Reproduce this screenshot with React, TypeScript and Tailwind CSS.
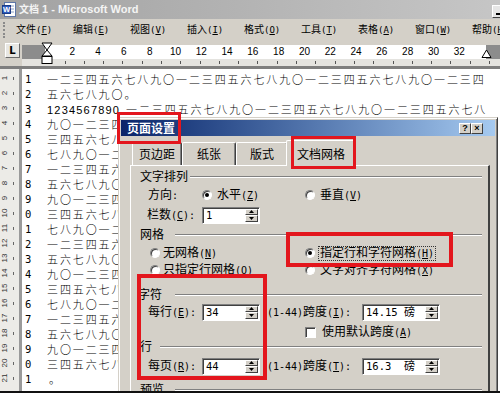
import React from "react";

const SEQ = "一二三四五六七八九〇";
const seq = (start: number, n: number) =>
  Array.from({ length: n }, (_, i) => SEQ[(start + i) % 10]).join("");

function Acc({ k, colon, small }: { k: string; colon?: boolean; small?: boolean }) {
  return (
    <span
      className={
        small
          ? "font-['DejaVu_Sans_Mono',monospace] text-[9px]"
          : "font-['DejaVu_Sans_Mono',monospace] text-[10px]"
      }
    >
      (<span className="underline underline-offset-1">{k}</span>){colon ? ":" : ""}
    </span>
  );
}

function Radio({ checked }: { checked?: boolean }) {
  return (
    <span className="inline-flex shrink-0 w-[10px] h-[10px] rounded-full bg-white items-center justify-center border border-t-[#808080] border-l-[#808080] border-r-white border-b-white shadow-[inset_1px_1px_0_#404040]">
      {checked ? <span className="block w-[4px] h-[4px] rounded-full bg-black" /> : null}
    </span>
  );
}

function SpinBtn({ up }: { up?: boolean }) {
  return (
    <div className="flex-1 bg-[#d4d0c8] border border-t-white border-l-white border-r-[#404040] border-b-[#404040] flex items-center justify-center">
      <svg width="5" height="3" viewBox="0 0 5 3">
        <polygon points={up ? "2.5,0 5,3 0,3" : "0,0 5,0 2.5,3"} fill="#000" />
      </svg>
    </div>
  );
}

function SpinBox({ children, wide }: { children: React.ReactNode; wide?: boolean }) {
  return (
    <div
      className={
        (wide ? "w-[78px]" : "w-[58px]") +
        " h-[17px] shrink-0 flex bg-white border border-t-[#808080] border-l-[#808080] border-r-white border-b-white shadow-[inset_1px_1px_0_#404040]"
      }
    >
      <div className="flex-1 pl-[3px] flex items-center text-[11px] leading-none whitespace-nowrap">
        {children}
      </div>
      <div className="w-[14px] flex flex-col py-[1px] pr-[1px]">
        <SpinBtn up />
        <SpinBtn />
      </div>
    </div>
  );
}

function Etched({ className }: { className: string }) {
  return (
    <div className={"flex-1 h-[2px] border-t border-t-[#808080] border-b border-b-white " + className} />
  );
}

function WordIcon() {
  return (
    <svg width="15" height="15" viewBox="0 0 15 15" className="shrink-0">
      <rect x="2.5" y="0.5" width="11" height="14" fill="#ffffff" stroke="#5f77a8" />
      <line x1="9" y1="4" x2="12" y2="4" stroke="#8aa0c8" />
      <line x1="9" y1="7" x2="12" y2="7" stroke="#8aa0c8" />
      <line x1="9" y1="10" x2="12" y2="10" stroke="#8aa0c8" />
      <rect x="0.5" y="3.5" width="8" height="8" fill="#2c5cc0" stroke="#1b3c86" />
      <text
        x="4.6"
        y="10.2"
        fontSize="7.5"
        fontWeight="bold"
        fill="#ffffff"
        textAnchor="middle"
        fontFamily="Liberation Sans, sans-serif"
      >
        W
      </text>
    </svg>
  );
}

const MENU: [string, string][] = [
  ["文件", "F"],
  ["编辑", "E"],
  ["视图", "V"],
  ["插入", "I"],
  ["格式", "O"],
  ["工具", "T"],
  ["表格", "A"],
  ["窗口", "W"],
  ["帮助", "H"],
];

const RULER_NUMS = [2, 4, 6, 8, 10, 12, 14, 16, 18, 20, 22, 24, 26, 28, 30, 32];

const docLines: React.ReactNode[] = [
  seq(0, 34),
  <>
    {seq(4, 6)}
    <span>。</span>
  </>,
  <>
    <span className="inline-block w-[79px] font-['Liberation_Sans',sans-serif] tracking-[1.2px]">
      1234567890
    </span>
    {seq(0, 28)}
  </>,
  ...Array.from({ length: 17 }, (_, k) => seq((8 + 4 * k) % 10, 34)),
  <span className="pl-[2px]">。</span>,
];

export default function App() {
  return (
    <div className="relative w-[500px] h-[393px] overflow-hidden flex flex-col bg-[#d4d0c8] text-black font-['Liberation_Sans','Noto_Sans_CJK_SC',sans-serif]">
      {/* Window title bar */}
      <div className="h-[19px] shrink-0 flex items-center bg-linear-to-r from-[#a2a2a2] to-[#c6c6c6] pl-[2px]">
        <WordIcon />
        <span className="ml-[2px] text-[11px] font-bold text-[#f4f4f4] leading-none whitespace-nowrap">
          <span className="text-[10px]">文档</span> 1 - Microsoft Word
        </span>
        <div className="ml-auto mr-[-9px] mt-[4px] w-[17px] h-[13px] bg-[#e6e6e6] border border-t-white border-l-white border-r-[#404040] border-b-[#404040] flex items-end pl-[3px] pb-[2px]">
          <div className="w-[5px] h-[2px] bg-black" />
        </div>
      </div>

      {/* Menu bar */}
      <div className="h-[22px] shrink-0 flex items-center">
        <div className="ml-[3px] w-[3px] h-[16px] border-l-2 border-dotted border-[#8a8a8a]" />
        <div className="flex ml-[11px]">
          {MENU.map(([t, k]) => (
            <span key={t} className="w-[57px] shrink-0 whitespace-nowrap text-[10px] leading-none">
              {t}
              <Acc k={k} small />
            </span>
          ))}
        </div>
      </div>

      {/* Horizontal ruler */}
      <div className="h-[18px] shrink-0 flex">
        <div className="w-[22px] shrink-0 pl-[5px] pt-[2px]">
          <div className="w-[15px] h-[15px] bg-[#e8e7e3] border border-t-white border-l-white border-r-[#6a6a6a] border-b-[#6a6a6a] flex items-center justify-center">
            <span className="text-[10px] font-bold leading-none font-['DejaVu_Sans',sans-serif]">L</span>
          </div>
        </div>
        <div className="flex-1 flex mt-[4px] h-[14px]">
          <div className="w-[23px] shrink-0 bg-[#8c8c8c]" />
          <div className="w-[441px] shrink-0 bg-white flex pl-[14.4px] text-[10px] leading-[14px] font-['Liberation_Sans',sans-serif]">
            {RULER_NUMS.map((n) => (
              <span key={n} className="w-[25.8px] shrink-0 text-center">
                {n}
              </span>
            ))}
          </div>
          <div className="flex-1 bg-[#8c8c8c]" />
        </div>
      </div>

      {/* Ruler tick strip */}
      <div className="h-[7px] shrink-0 flex">
        <div className="w-[22px] shrink-0" />
        <div className="flex-1 bg-[#e4e3df] flex pl-[42.5px] pt-[1.5px]">
          {Array.from({ length: 23 }, (_, i) => (
            <span key={i} className="w-[19.3px] shrink-0">
              <span className="block w-px h-[3px] bg-[#555]" />
            </span>
          ))}
        </div>
      </div>
      <div className="h-[3px] shrink-0 bg-[#7e7e7e]" />

      {/* Document area */}
      <div className="flex-1 min-h-0 flex">
        <div className="w-[19px] shrink-0 bg-[#ecebe7] flex flex-col pt-[1.5px]">
          {Array.from({ length: 21 }, (_, i) => (
            <div key={i} className="h-[15px] shrink-0 flex items-center">
              <span className="w-[11px] flex justify-center">
                <span className="-rotate-90 text-[8px] leading-none text-[#333] font-['Liberation_Sans',sans-serif]">
                  {i + 1}
                </span>
              </span>
              <span className="ml-[2px] block w-px h-[3px] bg-[#666]" />
            </div>
          ))}
        </div>
        <div className="w-[3px] shrink-0 bg-[#9a9a9a]" />
        <div className="flex-1 bg-white flex pt-[2.5px]">
          <div className="w-[25px] shrink-0 pl-[3px] flex flex-col font-['DejaVu_Sans_Mono',monospace] text-[10.5px] leading-[15px]">
            {Array.from({ length: 21 }, (_, i) => (
              <div key={i} className="h-[15px]">
                {(i + 1) % 10}
              </div>
            ))}
          </div>
          <div className="flex flex-col whitespace-nowrap text-[11px] font-light leading-[15px] tracking-[1.9px] font-['Noto_Sans_CJK_SC',sans-serif]">
            {docLines.map((l, i) => (
              <div key={i} className="h-[15px]">
                {l}
              </div>
            ))}
          </div>
        </div>
      </div>
      <div className="relative z-20 h-[2px] shrink-0 bg-[#111]" />

      {/* Page setup dialog */}
      <div className="absolute left-[118px] top-[117px] w-[380px] h-[290px] bg-[#d4d0c8] border border-t-[#d4d0c8] border-l-[#d4d0c8] border-r-[#404040] border-b-[#404040] shadow-[inset_1px_1px_0_#ffffff,inset_-1px_-1px_0_#808080] p-[2px] flex flex-col">
        <div className="h-[16px] shrink-0 flex items-center bg-linear-to-r from-[#0a246a] to-[#a6caf0] pl-[6px]">
          <span className="text-[12px] font-bold text-white leading-none font-['Noto_Sans_CJK_SC',sans-serif]">
            页面设置
          </span>
          <div className="ml-auto mr-[12px] flex">
            <div className="w-[12px] h-[11px] bg-[#d4d0c8] border border-t-white border-l-white border-r-[#404040] border-b-[#404040] flex items-center justify-center text-[9px] font-bold leading-none">
              ?
            </div>
            <div className="w-[12px] h-[11px] bg-[#d4d0c8] border border-t-white border-l-white border-r-[#404040] border-b-[#404040] flex items-center justify-center text-[9px] font-bold leading-none">
              ×
            </div>
          </div>
        </div>

        {/* Tabs */}
        <div className="mt-[4px] ml-[11px] h-[25px] shrink-0 flex items-end text-[12px] leading-none">
          <div className="w-[50px] h-[23px] pt-[2px] flex items-center justify-center rounded-t-[2px] border-t border-l border-r border-t-white border-l-white border-r-[#404040] shadow-[inset_-1px_0_0_#808080]">
            页边距
          </div>
          <div className="w-[54px] h-[23px] pt-[2px] flex items-center justify-center rounded-t-[2px] border-t border-l border-r border-t-white border-l-white border-r-[#404040] shadow-[inset_-1px_0_0_#808080]">
            纸张
          </div>
          <div className="w-[52px] h-[23px] pt-[2px] flex items-center justify-center rounded-t-[2px] border-t border-l border-r border-t-white border-l-white border-r-[#404040] shadow-[inset_-1px_0_0_#808080]">
            版式
          </div>
          <div className="relative z-10 ml-[-2px] mb-[-1px] w-[70px] h-[26px] pt-[3px] bg-[#d4d0c8] flex items-center justify-center rounded-t-[2px] border-t border-l border-r border-t-white border-l-white border-r-[#404040] shadow-[inset_-1px_0_0_#808080]">
            文档网格
          </div>
        </div>

        {/* Tab panel */}
        <div className="ml-[9px] w-[360px] flex-1 border-t border-l border-r-2 border-t-white border-l-white border-r-[#404040] pt-[3.5px] flex flex-col text-[12px] leading-[15px]">
          {/* 文字排列 */}
          <div className="h-[15px] flex items-center pl-[9px]">
            <span className="w-[50px] shrink-0">文字排列</span>
            <Etched className="mr-[6px]" />
          </div>
          <div className="mt-[3px] h-[15px] flex items-center pl-[17px]">
            <span className="w-[54px] shrink-0">
              方向<span className="font-['DejaVu_Sans_Mono',monospace] text-[10px]">:</span>
            </span>
            <Radio checked />
            <span className="ml-[5px] w-[88px] shrink-0">
              水平<Acc k="Z" />
            </span>
            <Radio />
            <span className="ml-[5px]">
              垂直<Acc k="V" />
            </span>
          </div>
          <div className="mt-[5px] h-[15px] flex items-center pl-[16px]">
            <span className="w-[55px] shrink-0 whitespace-nowrap">
              栏数<Acc k="C" colon />
            </span>
            <SpinBox>
              <span className="font-['DejaVu_Sans_Mono',monospace] text-[10.5px]">1</span>
            </SpinBox>
          </div>

          {/* 网格 */}
          <div className="mt-[5px] h-[15px] flex items-center pl-[9px]">
            <span className="w-[35px] shrink-0">网格</span>
            <Etched className="mr-[6px]" />
          </div>
          <div className="mt-[3px] h-[15px] flex items-center pl-[19px]">
            <Radio />
            <span className="ml-[3px] w-[142px] shrink-0">
              无网格<Acc k="N" />
            </span>
            <Radio checked />
            <span className="ml-[3px] px-[1px] border border-dotted border-[#333] leading-[13px] whitespace-nowrap">
              指定行和字符网格<Acc k="H" />
            </span>
          </div>
          <div className="mt-[2px] h-[15px] flex items-center pl-[19px]">
            <Radio />
            <span className="ml-[3px] w-[142px] shrink-0 whitespace-nowrap">
              只指定行网格<Acc k="O" />
            </span>
            <Radio />
            <span className="ml-[5px] whitespace-nowrap">
              文字对齐字符网格<Acc k="X" />
            </span>
          </div>

          {/* 字符 */}
          <div className="mt-[10px] h-[15px] flex items-center pl-[7px]">
            <span className="w-[37px] shrink-0">字符</span>
            <Etched className="mr-[6px]" />
          </div>
          <div className="mt-[2px] h-[15px] flex items-center pl-[17px]">
            <span className="w-[54px] shrink-0 whitespace-nowrap">
              每行<Acc k="E" colon />
            </span>
            <SpinBox>
              <span className="font-['DejaVu_Sans_Mono',monospace] text-[10.5px]">34</span>
            </SpinBox>
            <span className="ml-[7px] w-[36px] shrink-0 whitespace-nowrap font-['DejaVu_Sans_Mono',monospace] text-[10px]">
              (1-44)
            </span>
            <span className="w-[59px] shrink-0 whitespace-nowrap">
              跨度<Acc k="I" colon />
            </span>
            <SpinBox wide>
              <span className="font-['DejaVu_Sans_Mono',monospace] text-[10.5px] whitespace-pre">14.15 </span>
              <span className="text-[11px]">磅</span>
            </SpinBox>
          </div>
          <div className="mt-[5px] h-[15px] flex items-center pl-[174px]">
            <span className="w-[11px] h-[11px] shrink-0 bg-white border border-t-[#808080] border-l-[#808080] border-r-white border-b-white shadow-[inset_1px_1px_0_#404040]" />
            <span className="ml-[6px] whitespace-nowrap">
              使用默认跨度<Acc k="A" />
            </span>
          </div>

          {/* 行 */}
          <div className="mt-[0px] h-[15px] flex items-center pl-[9px]">
            <span className="w-[20px] shrink-0">行</span>
            <Etched className="mr-[6px]" />
          </div>
          <div className="mt-[4px] h-[15px] flex items-center pl-[17px]">
            <span className="w-[54px] shrink-0 whitespace-nowrap">
              每页<Acc k="R" colon />
            </span>
            <SpinBox>
              <span className="font-['DejaVu_Sans_Mono',monospace] text-[10.5px]">44</span>
            </SpinBox>
            <span className="ml-[7px] w-[36px] shrink-0 whitespace-nowrap font-['DejaVu_Sans_Mono',monospace] text-[10px]">
              (1-44)
            </span>
            <span className="w-[59px] shrink-0 whitespace-nowrap">
              跨度<Acc k="T" colon />
            </span>
            <SpinBox wide>
              <span className="font-['DejaVu_Sans_Mono',monospace] text-[10.5px] whitespace-pre">16.3  </span>
              <span className="text-[11px]">磅</span>
            </SpinBox>
          </div>

          {/* 预览 */}
          <div className="mt-[9px] h-[15px] flex items-center pl-[9px]">
            <span className="w-[35px] shrink-0">预览</span>
            <Etched className="mr-[6px]" />
          </div>
        </div>
      </div>

      {/* Ruler indent markers */}
      <svg className="absolute left-[41px] top-[42px]" width="12" height="23" viewBox="0 0 12 23">
        <polygon points="1,1 11,1 6,8" fill="#fff" stroke="#000" strokeWidth="1" />
        <polygon points="6,8 11,14 1,14" fill="#fff" stroke="#000" strokeWidth="1" />
        <rect x="1" y="14.5" width="10" height="7" fill="#fff" stroke="#000" strokeWidth="1" />
      </svg>
      <svg className="absolute left-[481px] top-[49px]" width="11" height="10" viewBox="0 0 11 10">
        <polygon points="5.5,1 10,8.5 1,8.5" fill="#fff" stroke="#000" strokeWidth="1" />
      </svg>

      {/* Red highlight boxes */}
      <div className="absolute z-30 left-[117px] top-[112px] w-[64px] h-[32px] border-[3px] border-[#e3161d]" />
      <div className="absolute z-30 left-[291px] top-[136px] w-[65px] h-[33px] border-[3px] border-[#e3161d]" />
      <div className="absolute z-30 left-[286px] top-[232px] w-[167px] h-[35px] border-[4px] border-[#e3161d]" />
      <div className="absolute z-30 left-[137px] top-[274px] w-[130px] h-[106px] border-[4px] border-[#e3161d]" />
    </div>
  );
}
